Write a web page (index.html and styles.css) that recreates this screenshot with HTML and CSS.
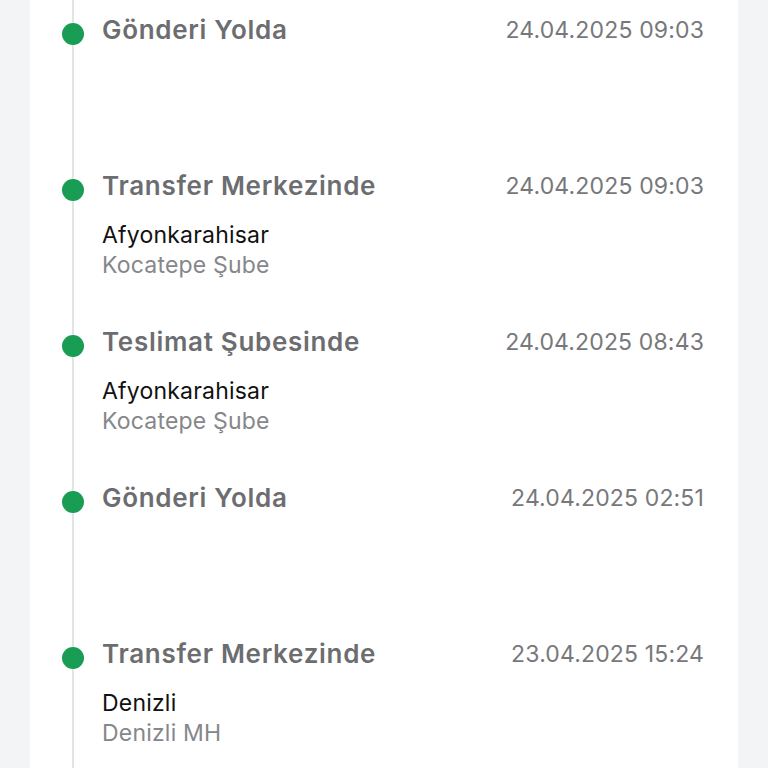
FILE: index.html
```html
<!DOCTYPE html>
<html lang="tr">
<head>
    <meta charset="UTF-8">
    <meta name="viewport" content="width=device-width, initial-scale=1.0">
    <title>Gönderi Hareketleri</title>
    <link rel="stylesheet" href="styles.css">
</head>
<body>

    <div class="card">
        <ul class="timeline">
            <li class="event">
                <span class="dot"></span>
                <div class="event-head">
                    <span class="status">Gönderi Yolda</span>
                    <span class="date">24.04.2025 09:03</span>
                </div>
            </li>
            <li class="event">
                <span class="dot"></span>
                <div class="event-head">
                    <span class="status">Transfer Merkezinde</span>
                    <span class="date">24.04.2025 09:03</span>
                </div>
                <div class="place">
                    <div class="city">Afyonkarahisar</div>
                    <div class="branch">Kocatepe Şube</div>
                </div>
            </li>
            <li class="event">
                <span class="dot"></span>
                <div class="event-head">
                    <span class="status">Teslimat Şubesinde</span>
                    <span class="date">24.04.2025 08:43</span>
                </div>
                <div class="place">
                    <div class="city">Afyonkarahisar</div>
                    <div class="branch">Kocatepe Şube</div>
                </div>
            </li>
            <li class="event">
                <span class="dot"></span>
                <div class="event-head">
                    <span class="status">Gönderi Yolda</span>
                    <span class="date">24.04.2025 02:51</span>
                </div>
            </li>
            <li class="event">
                <span class="dot"></span>
                <div class="event-head">
                    <span class="status">Transfer Merkezinde</span>
                    <span class="date">23.04.2025 15:24</span>
                </div>
                <div class="place">
                    <div class="city">Denizli</div>
                    <div class="branch">Denizli MH</div>
                </div>
            </li>
        </ul>
    </div>

</body>
</html>
```

FILE: styles.css
```css
/* Page */
body {
    margin: 0;
    padding: 0;
    background-color: #f3f4f6;
    font-family: Inter, "Noto Sans", sans-serif;
    color: #222;
}

/* White card holding the timeline */
.card {
    background-color: #fff;
    margin-left: 30px;
    width: 708px;
    min-height: 768px;
}

.timeline {
    list-style: none;
    margin: 0;
    padding: 0 34px 0 72px;
    position: relative;
}

/* Vertical line */
.timeline::before {
    content: "";
    position: absolute;
    left: 42px;
    top: 0;
    bottom: 0;
    width: 2px;
    background-color: #e3e4e6;
}

.event {
    position: relative;
    height: 156px;
    padding-top: 14px;
    box-sizing: border-box;
}

.dot {
    position: absolute;
    left: -40px;
    top: 23px;
    width: 22px;
    height: 22px;
    border-radius: 50%;
    background-color: #199c54;
}

.event-head {
    display: flex;
    justify-content: space-between;
    align-items: center;
    line-height: 32px;
}

.status {
    font-size: 26px;
    font-weight: 600;
    letter-spacing: 0.7px;
    color: #6c6d70;
}

.date {
    font-size: 23px;
    letter-spacing: 0.15px;
    color: #77787b;
}

/* Location lines */
.place {
    margin-top: 18px;
    font-size: 23px;
    line-height: 30px;
    letter-spacing: 0.2px;
}

.city {
    color: #111;
}

.branch {
    color: #86878a;
}
```
